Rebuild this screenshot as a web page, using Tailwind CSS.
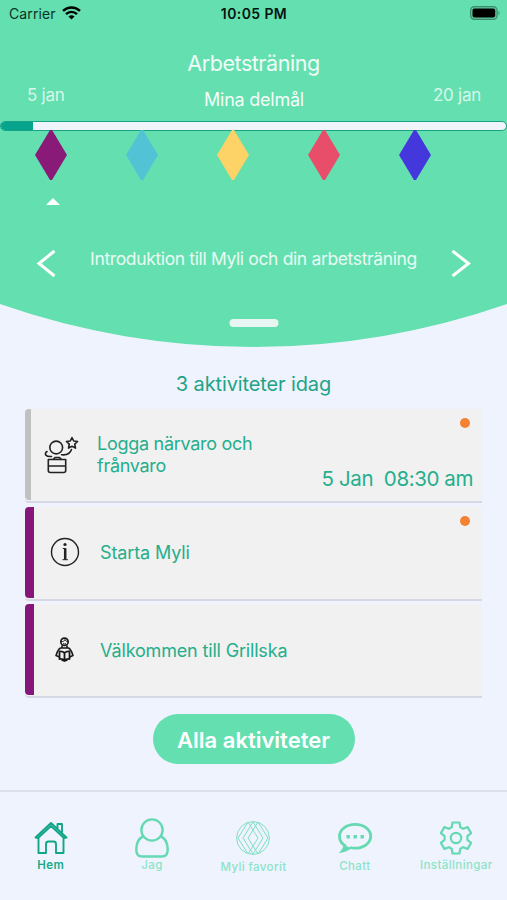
<!DOCTYPE html>
<html lang="sv">
<head>
<meta charset="utf-8">
<title>Myli</title>
<script src="https://cdn.jsdelivr.net/npm/@tailwindcss/browser@4"></script>
</head>
<body class="w-[507px] h-[900px] overflow-hidden bg-[#eef3fd] font-['Inter','Liberation_Sans',sans-serif] flex flex-col">
<header class="h-[304px] shrink-0 bg-[#64dfb0] text-white flex flex-col">
  <div class="h-7 grid grid-cols-3 items-center pl-[9px] pr-[6px] text-black text-[14px] leading-none">
    <div class="flex items-center gap-[6px]"><span class="tracking-[0.1px] text-[#0b3326]">Carrier</span>
      <svg class="w-[19px] h-[14px] -mt-[2px]" viewBox="0 0 19 14" fill="none" stroke="#000" stroke-width="2.4"><path d="M1 4.9a12.2 12.2 0 0 1 17 0M4 8.1a7.8 7.8 0 0 1 11 0"/><path d="M9.500 13.600L6.500 10.600a4.300 4.300 0 0 1 6 0z" fill="#000" stroke="none"/></svg>
    </div>
    <div class="text-center font-semibold tracking-[0.4px] -ml-[2px] text-[#04150f]">10:05 PM</div>
    <svg class="justify-self-end w-[31px] h-[14px] -mt-[2px]" viewBox="0 0 31 14"><rect x=".6" y=".6" width="26.500" height="12.800" rx="3.800" fill="#5cc79e" stroke="#3c8c6e" stroke-width="1.200"/><rect x="2.500" y="2.500" width="22.700" height="9" rx="2" fill="#000"/><path d="M28.500 4.700q2.200 2.300 0 4.600z" fill="#3c8c6e"/></svg>
  </div>
  <h1 class="mt-[21px] mb-[1px] h-7 leading-7 text-center text-[21.500px] tracking-[-0.450px] text-white/90">Arbetsträning</h1>
  <div class="flex justify-between items-start h-[43px] pl-[27px] pr-[26px] pt-[5px] leading-6 text-[17px] tracking-[-0.250px] text-white/75">
    <span class="w-[90px]">5 jan</span>
    <span class="pt-[5px] text-[18px] text-white/95">Mina delmål</span>
    <span class="w-[90px] text-right">20 jan</span>
  </div>
  <div class="h-[10px] rounded-full border-[1.500px] border-[#18a286] bg-[#eff4fb] overflow-hidden"><div class="h-full w-[32px] bg-[#06a48c]"></div></div>
  <div class="-mt-[1px] flex gap-[59px] pl-[34.600px]">
    <svg class="w-8 h-[50px]" viewBox="0 0 32 50"><path d="M15 0h2l15 25-15 25h-2L0 25z" fill="#8a1a78"/></svg>
    <svg class="w-8 h-[50px]" viewBox="0 0 32 50"><path d="M15 0h2l15 25-15 25h-2L0 25z" fill="#52c3d4"/></svg>
    <svg class="w-8 h-[50px]" viewBox="0 0 32 50"><path d="M15 0h2l15 25-15 25h-2L0 25z" fill="#fdd267"/></svg>
    <svg class="w-8 h-[50px]" viewBox="0 0 32 50"><path d="M15 0h2l15 25-15 25h-2L0 25z" fill="#e84d69"/></svg>
    <svg class="w-8 h-[50px]" viewBox="0 0 32 50"><path d="M15 0h2l15 25-15 25h-2L0 25z" fill="#4438dc"/></svg>
  </div>
  <svg class="mt-[18px] ml-[46px] w-[14px] h-[7px] shrink-0" viewBox="0 0 14 7"><path d="M7 0l7 7H0z" fill="#fff"/></svg>
  <div class="mt-[44px] px-[36px] flex justify-between items-start">
    <svg class="w-5 h-7" viewBox="0 0 20 28" fill="none" stroke="#fff" stroke-width="3"><path d="M18.500 2L3 14.500 18.500 27"/></svg>
    <span class="text-[17.500px] tracking-[-0.360px] leading-5 text-white/85">Introduktion till Myli och din arbetsträning</span>
    <svg class="w-5 h-7" viewBox="0 0 20 28" fill="none" stroke="#fff" stroke-width="3"><path d="M1.500 2L17.500 14.500 1.500 27"/></svg>
  </div>
</header>
<svg class="w-[507px] h-[43px] shrink-0" viewBox="0 0 507 43"><path d="M0 0A769 769 0 0 0 507 0z" fill="#64dfb0"/><rect x="229.500" y="15" width="49" height="8" rx="4" fill="#e9f5f2"/></svg>
<main class="h-[443px] shrink-0 px-[25px] pt-[25px] flex flex-col items-center text-[#25ae8c]">
  <h2 class="h-6 leading-[25px] text-[20px] tracking-[-0.120px] text-[#22a386]">3 aktiviteter idag</h2>
  <ul class="mt-[13px] w-[457px] flex flex-col gap-[3.500px] text-[18px]">
    <li class="h-[94px] flex bg-[#f1f1f1] border-b-2 border-[#d6d9e5] rounded-l-[4px]">
      <div class="w-[6px] h-[91px] bg-[#c1c1c1] rounded-l-[4px]"></div>
      <svg class="mt-[27px] ml-[13px] w-[36px] h-[38px]" viewBox="0 0 36 38" fill="none" stroke="#222" stroke-width="1.600" stroke-linecap="round" stroke-linejoin="round"><circle cx="12.200" cy="11.500" r="6.400"/><path d="M28 1.600l1.700 3.400 3.900.5-2.900 2.700.8 3.900-3.500-1.900-3.500 1.900.8-3.900-2.900-2.700 3.900-.5zM27.500 13.500c-1.500 4.500-5 5.800-10 5.200M3 15.500c-3.500 2.500-1 5.500 4.500 5M4.300 23.500h17.400v11a2 2 0 0 1-2 2H6.300a2 2 0 0 1-2-2zM4.500 30h17M9.500 23l1.500-1.500h4.500L17 23"/></svg>
      <p class="ml-[17px] pt-[24px] w-[170px] leading-[22px] tracking-[-0.280px]">Logga närvaro och frånvaro</p>
      <div class="flex-1 flex flex-col items-end justify-between pt-[9px] pb-[8px] pr-[9px] whitespace-pre"><i class="w-[10px] h-[10px] mr-[3px] rounded-full bg-[#f58233]"></i><span class="text-[20.500px] tracking-[-0.400px] leading-7">5 Jan  08:30 am</span></div>
    </li>
    <li class="h-[94px] flex bg-[#f1f1f1] border-b-2 border-[#d6d9e5] rounded-l-[4px]">
      <div class="w-[9px] h-[91px] bg-[#87167a] rounded-l-[4px]"></div>
      <svg class="mt-[30px] ml-[16px] w-[30px] h-[30px]" viewBox="0 0 30 30" fill="none" stroke="#222"><circle cx="15" cy="15" r="13.500" stroke-width="1.400"/><path d="M12.800 11.500h2.600v11" stroke-width="1"/><path d="M15.200 11.300v11.200" stroke-width="2.500"/><path d="M12.500 22.700h5.400" stroke-width="1"/><circle cx="15" cy="7.500" r="1.600" fill="#222" stroke="none"/></svg>
      <p class="ml-[20px] pt-[35px] leading-[22px] tracking-[-0.120px]">Starta Myli</p>
      <i class="ml-auto mt-[9px] mr-[12px] w-[10px] h-[10px] rounded-full bg-[#f58233]"></i>
    </li>
    <li class="h-[94px] flex bg-[#f1f1f1] border-b-2 border-[#d6d9e5] rounded-l-[4px]">
      <div class="w-[9px] h-[91px] bg-[#87167a] rounded-l-[4px]"></div>
      <svg class="mt-[33px] ml-[21px] w-[19px] h-[25px]" viewBox="0 0 19 25" fill="none" stroke="#181818" stroke-width="1.600" stroke-linejoin="round"><circle cx="9.500" cy="4.800" r="3.700"/><path d="M6 4.500c2 .3 3.500-.3 4-2 .3 1.300 1.500 2 3 2M8 6.500q1.500 1.200 3 0" stroke-width="1"/><path d="M5.500 11h8c2.500 1 3.500 4.500 4.500 7.500l-3.500 1.500M5.500 11C3 12 2 15.500 1 18.500l3.500 1.500M7 8.500v2M12 8.500v2"/><path d="M4.500 14.500q3-.5 5 1.500 2-2 5-1.500v7.500q-3-.5-5 1.500-2-2-5-1.500zM9.500 16v7.500M6.500 23l3 1 3-1" stroke-width="1.800"/></svg>
      <p class="ml-[26px] pt-[35px] leading-[23px] tracking-[-0.170px]">Välkommen till Grillska</p>
    </li>
  </ul>
  <button class="mt-[16px] w-[202px] h-[50px] shrink-0 rounded-full bg-[#64dfb0] text-white text-[22px] leading-[52px] font-semibold">Alla aktiviteter</button>
</main>
<nav class="h-[110px] shrink-0 border-t-2 border-[#dde1eb] grid grid-cols-5 text-[11.500px] font-medium tracking-[0.4px] leading-4 text-[#8be3c8]">
  <a class="flex flex-col items-center pt-[29px] text-[#18a98b] font-semibold"><svg class="w-[34px] h-[34px]" viewBox="0 0 34 34" fill="none" stroke="#12a688" stroke-width="2.100" stroke-linejoin="round" stroke-linecap="round"><path d="M1.500 16.500L17 2l15.500 14.500-2.500.5L17 5 4 17zM4.500 17v15h7.500V23a2.500 2.500 0 0 1 2.500-2.500h5a2.500 2.500 0 0 1 2.500 2.500v9h7.500V17M23.500 7.500V3h4.500v8.500" stroke-width="1.900"/></svg><span class="mt-[2px]">Hem</span></a>
  <a class="flex flex-col items-center pt-[26px]"><svg class="w-[34px] h-[40px]" viewBox="0 0 34 40" fill="none" stroke="#64d9b2" stroke-width="2.400"><circle cx="17" cy="12" r="10.600"/><path d="M8 18.300C3.500 20.500 1.300 26 1.300 32q0 6.500 6 6.500h19.400q6 0 6-6.500c0-6-2.200-11.500-6.700-13.700"/></svg><span class="-mt-[1px]">Jag</span></a>
  <a class="flex flex-col items-center pt-[28px]"><svg class="w-[34px] h-[36px]" viewBox="0 0 34 36" fill="none" stroke="#80dfc2" stroke-width="1"><circle cx="17" cy="18" r="16.400"/><path d="M12 2L2 18l10 16M22 2l10 16-10 16M17 2L7 18l10 16 10-16zM12 2l10 16-10 16M22 2L12 18l10 16"/></svg><span class="mt-[3px]">Myli favorit</span></a>
  <a class="flex flex-col items-center pt-[30px]"><svg class="w-[34px] h-[32px]" viewBox="0 0 34 32" fill="none" stroke="#64d9b2" stroke-width="2.800"><path d="M8 24.200C3.500 22 1.500 18.500 1.500 14.300 1.500 7.500 8.500 2.400 17.200 2.400S32.700 7.500 32.700 14.300 25.700 26.200 17 26.200c-1.800 0-3.400-.1-5-.7"/><path d="M5.500 23Q5 27.500 .5 31q8-.5 13-5z" fill="#64d9b2" stroke="none"/><path d="M8.500 13h3.400v3.400H8.500zM15.500 13h3.400v3.400h-3.400zM22.500 13h3.400v3.400h-3.400z" fill="#64d9b2" stroke="none"/></svg><span class="mt-[4px]">Chatt</span></a>
  <a class="flex flex-col items-center pt-[29px]"><svg class="w-[34px] h-[34px]" viewBox="0 0 34 34" fill="none" stroke="#64d9b2" stroke-width="2.200" stroke-linejoin="round"><circle cx="17" cy="17" r="5.200"/><path d="M13.500 1.500h7l.8 4.700 2.800 1.600 4.500-1.700 3.500 6-3.700 3.100v3.600l3.700 3.100-3.500 6-4.500-1.700-2.800 1.600-.8 4.700h-7l-.8-4.700-2.800-1.600-4.500 1.700-3.500-6 3.700-3.100v-3.600l-3.700-3.100 3.500-6 4.500 1.700 2.800-1.600z"/></svg><span class="mt-[2px]">Inställningar</span></a>
</nav>
</body>
</html>
